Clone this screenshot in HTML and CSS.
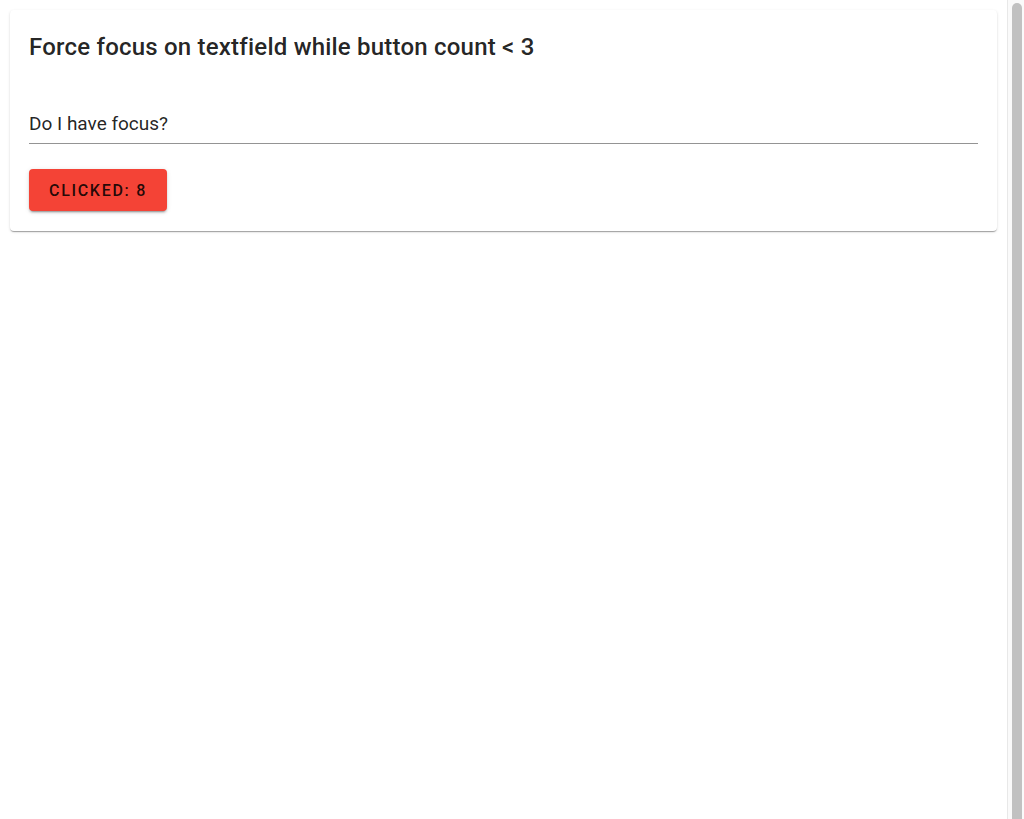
FILE: index.html
```html
<!DOCTYPE html>
<html lang="en">
<head>
<meta charset="utf-8">
<title>Force focus</title>
<link rel="stylesheet" href="styles.css">
</head>
<body>
<div class="page">
  <div class="card">
    <h2 class="card-title">Force focus on textfield while button count &lt; 3</h2>
    <div class="field">
      <input class="field-input" type="text" value="Do I have focus?">
    </div>
    <button class="btn" type="button">Clicked: 8</button>
  </div>
</div>
<div class="scrollbar"><div class="scrollbar-thumb"></div></div>
</body>
</html>
```

FILE: styles.css
```css
html, body {
  margin: 0;
  padding: 0;
  background: #ffffff;
}

body {
  font-family: Roboto, "Liberation Sans", sans-serif;
  color: rgba(0, 0, 0, 0.87);
}

.page {
  padding: 10px 27px 10px 10px;
}

.card {
  background: #ffffff;
  border-radius: 4px;
  box-shadow: 0 2px 1px -1px rgba(0,0,0,0.2), 0 1px 1px 0 rgba(0,0,0,0.14), 0 1px 3px 0 rgba(0,0,0,0.12);
  padding: 21px 19px 20px 19px;
}

.card-title {
  margin: 0;
  font-size: 24px;
  font-weight: 500;
  line-height: 32px;
  letter-spacing: 0.21px;
}

.field {
  margin-top: 46px;
  border-bottom: 1px solid rgba(0, 0, 0, 0.42);
}

.field-input {
  display: block;
  width: 100%;
  box-sizing: border-box;
  border: 0;
  outline: none;
  padding: 3px 0 8px;
  margin: 0;
  font-family: inherit;
  font-size: 19px;
  line-height: 23px;
  color: rgba(0, 0, 0, 0.87);
  background: transparent;
}

.btn {
  display: block;
  margin-top: 25px;
  height: 42px;
  padding: 0 20px 0 20px;
  border: 0;
  border-radius: 4px;
  background: #f44336;
  color: rgba(0, 0, 0, 0.87);
  font-family: inherit;
  font-size: 16px;
  font-weight: 500;
  letter-spacing: 1.7px;
  text-transform: uppercase;
  box-shadow: 0 3px 1px -2px rgba(0,0,0,0.2), 0 2px 2px 0 rgba(0,0,0,0.14), 0 1px 5px 0 rgba(0,0,0,0.12);
}

.scrollbar {
  position: fixed;
  top: 0;
  right: 0;
  bottom: 0;
  width: 16px;
  background: #fafafa;
  border-left: 1px solid #e8e8e8;
  overflow: hidden;
}

.scrollbar-thumb {
  position: absolute;
  top: 3px;
  left: 4px;
  width: 10px;
  height: 900px;
  border-radius: 5px;
  background: #c1c1c1;
}
```
